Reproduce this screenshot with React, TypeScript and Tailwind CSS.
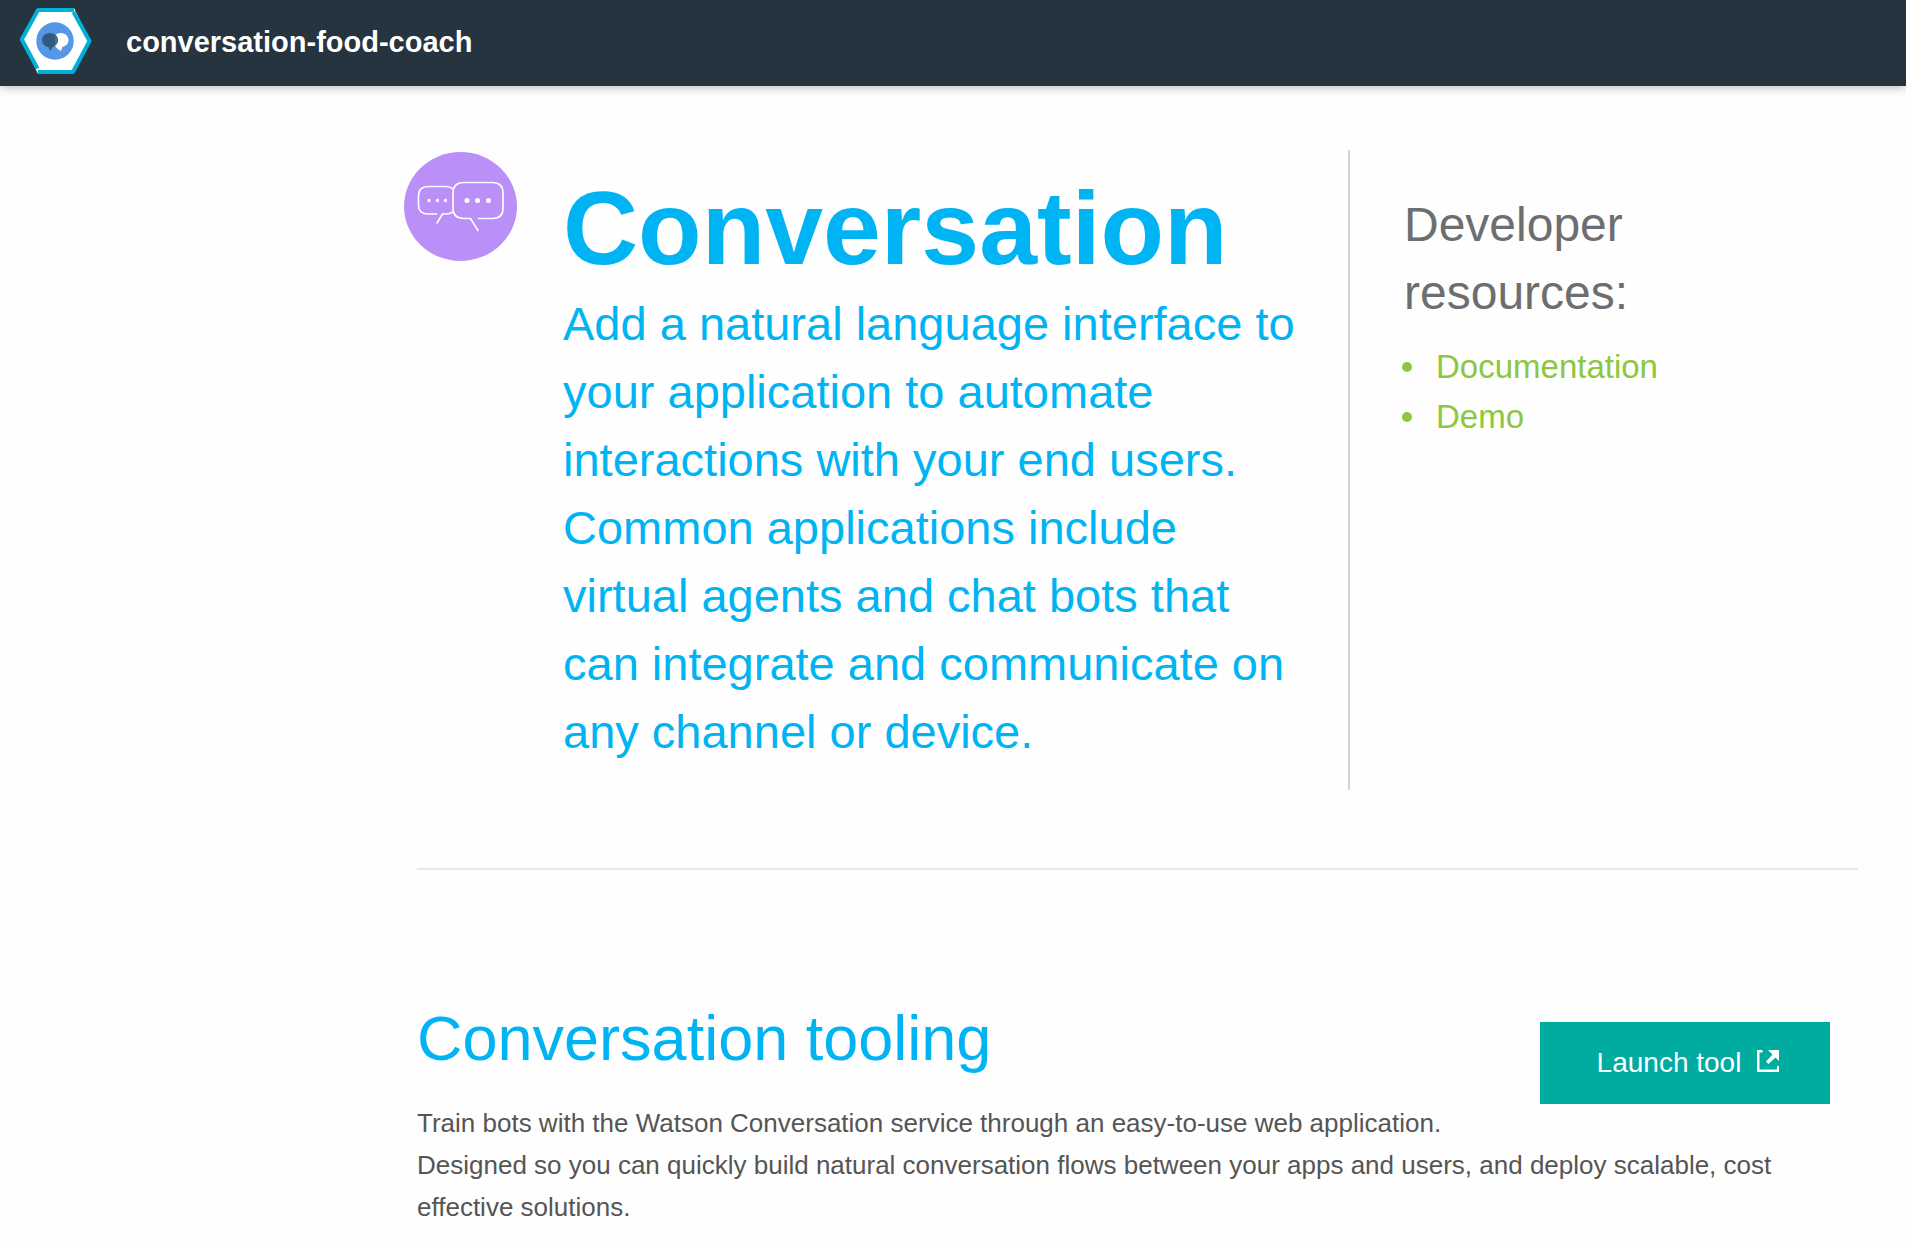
function ServiceLogo() {
  return (
    <svg className="h-[66px] w-[72px] shrink-0" viewBox="0 0 72 66" aria-hidden="true">
      <path d="M18 0H54L70 33L53 66H18L2 32Z" fill="#fff" />
      <path d="M18 0H54V4H18ZM18 62H54V66H18Z" fill="#00b0d6" />
      <path d="M18 2L1.800 31.500L17.500 60.500M53.500 4L69.500 33L53 64" fill="none" stroke="#00b0d6" strokeWidth="4" />
      <circle cx="35" cy="33" r="18.700" fill="#5596e6" />
      <path d="M41 25C45 25 48.500 28 48.500 32C48.500 35.500 46 38 42.500 38.800L41 43C38 41.500 36 39.500 34.500 37V27.500C36.500 25.800 38.500 25 41 25Z" fill="#fff" />
      <path d="M30 25C34.500 25 38 28 38 32C38 35.500 35.500 38 32.500 39.300L30 43L28.500 39.300C24.500 38.500 22 35.500 22 32C22 28 25.500 25 30 25Z" fill="#315b80" />
      <path d="M35 27.500Q38 29 38 32Q38 35 35 37.500Z" fill="#4a6f8f" />
    </svg>
  );
}

function ConversationBadge() {
  return (
    <svg className="mt-0.5 h-[109px] w-[113px] shrink-0" viewBox="0 0 113 109" aria-hidden="true">
      <ellipse cx="56.500" cy="54.500" rx="56.500" ry="54.500" fill="#ba8ff7" />
      <g fill="none" stroke="#fff" strokeWidth="1.600" strokeLinecap="round" strokeLinejoin="round">
        <path d="M49 37Q46 34.500 42 34.500H24Q14.500 34.500 14.500 44V53Q14.500 62 24 62H32.500M49 60Q46 62 42 62H38.500L33 71" />
        <path d="M74.500 66.500H89Q99 66.500 99 56V41Q99 30.500 88 30.500H60Q49 30.500 49 41V56Q49 66.500 60 66.500H66.500L74 78.500" />
      </g>
      <g fill="#fff">
        <circle cx="25" cy="48.500" r="1.700" />
        <circle cx="33.500" cy="48.500" r="1.700" />
        <circle cx="41.500" cy="48.500" r="1.700" />
        <circle cx="63" cy="48.500" r="2.500" />
        <circle cx="73.500" cy="48.500" r="2.500" />
        <circle cx="84.500" cy="48.500" r="2.500" />
      </g>
    </svg>
  );
}

function LaunchIcon() {
  return (
    <svg className="mb-1 size-[22px]" viewBox="0 0 22 22" fill="#fff" aria-hidden="true">
      <path d="M0 0H5.500V2.500H2.500V19.500H20V16H22V22H0Z" />
      <path d="M11 0H22V11L18.500 7.500L11.500 14L9 11.500L15.500 4.500Z" />
    </svg>
  );
}

const resources = ["Documentation", "Demo"];

export default function App() {
  return (
    <div className="min-h-screen bg-[#fefefe] font-['Liberation_Sans',sans-serif]">
      <header className="flex h-[86px] items-center gap-[34px] bg-[#26343f] px-5 shadow-[0_1px_10px_rgba(0,0,0,0.3)]">
        <div className="pb-1">
          <ServiceLogo />
        </div>
        <span className="text-[29px] font-bold text-white">conversation-food-coach</span>
      </header>
      <main className="pt-16 pr-12 pl-[404px]">
        <section className="flex items-stretch">
          <ConversationBadge />
          <div className="min-w-0 flex-1 pt-[26px] pr-10 pb-6 pl-[46px] text-[#00b4f4]">
            <h1 className="text-[104px] leading-[104px] font-bold">Conversation</h1>
            <p className="mt-2.5 text-[47px] leading-[68px]">
              Add a natural language interface to your application to automate interactions with your end users.
              Common applications include virtual agents and chat bots that can integrate and communicate on any
              channel or device.
            </p>
          </div>
          <aside className="w-[510px] shrink-0 border-l-2 border-[#d2d2d2] pt-[41px] pl-[52px]">
            <h2 className="max-w-[300px] pl-0.5 text-[48px] leading-[68px] text-[#6d6e70]">Developer resources:</h2>
            <ul className="mt-[15px] text-[33px] leading-[50px] text-[#8dc63f]">
              {resources.map((name) => (
                <li key={name} className="flex items-center gap-6">
                  <span className="size-2.5 rounded-full bg-[#8dc63f]" />
                  <a href="#">{name}</a>
                </li>
              ))}
            </ul>
          </aside>
        </section>
        <section className="pl-[13px]">
          <hr className="mt-[78px] border-t-2 border-[#e8e8e8]" />
          <div className="mt-[130px] flex items-start justify-between pr-7">
            <h2 className="text-[63px] leading-[76px] text-[#00b4f4]">Conversation tooling</h2>
            <button
              type="button"
              className="mt-[22px] flex h-[82px] w-[290px] items-center justify-center gap-4 bg-[#00aba0] pl-1.5 text-[28px] text-white"
            >
              Launch tool
              <LaunchIcon />
            </button>
          </div>
          <p className="-mt-0.5 text-[26px] leading-[42px] text-[#555]">
            Train bots with the Watson Conversation service through an easy-to-use web application.
            <br />
            Designed so you can quickly build natural conversation flows between your apps and users, and deploy
            scalable, cost effective solutions.
          </p>
        </section>
      </main>
    </div>
  );
}
